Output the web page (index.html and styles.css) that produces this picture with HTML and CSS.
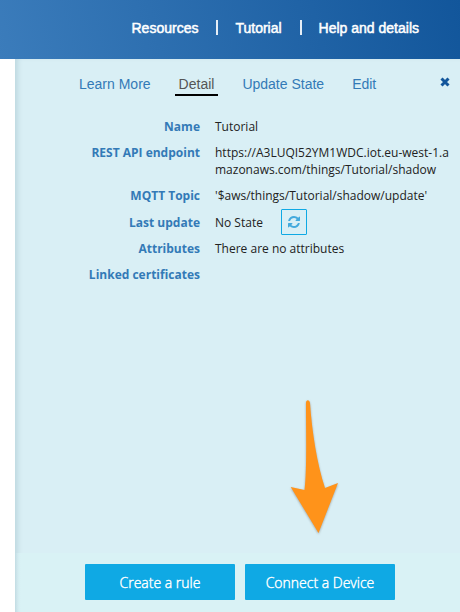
FILE: index.html
```html
<!DOCTYPE html>
<html lang="en">
<head>
<meta charset="utf-8">
<meta name="viewport" content="width=device-width, initial-scale=1">
<title>Tutorial</title>
<link rel="stylesheet" href="styles.css">
</head>
<body>
<header class="topbar">
  <nav class="topnav" aria-label="Main">
    <a href="#">Resources</a>
    <a href="#">Tutorial</a>
    <a href="#">Help and details</a>
  </nav>
</header>
<main class="panel">
  <div class="panel-head">
    <nav class="tabs" aria-label="Thing">
      <a class="tab" href="#">Learn More</a>
      <a class="tab active" href="#" aria-current="page">Detail</a>
      <a class="tab" href="#">Update State</a>
      <a class="tab" href="#">Edit</a>
    </nav>
    <button class="close" type="button" aria-label="Close">
      <svg width="10" height="10" viewBox="0 0 10 10"><path d="M1.500 1.500 8.500 8.500M8.500 1.500 1.500 8.500" stroke="currentColor" stroke-width="3"/></svg>
    </button>
  </div>
  <dl class="details">
    <dt>Name</dt><dd>Tutorial</dd>
    <dt>REST API endpoint</dt><dd>https://A3LUQI52YM1WDC.iot.eu-west-1.amazonaws.com/things/Tutorial/shadow</dd>
    <dt>MQTT Topic</dt><dd>'$aws/things/Tutorial/shadow/update'</dd>
    <dt class="state">Last update</dt>
    <dd class="state">No State
      <button class="refresh" type="button" aria-label="Refresh">
        <svg width="12" height="12" viewBox="0 0 1536 1536" fill="currentColor"><path d="M1511 928q0 5-1 7-64 268-268 434.500T764 1536q-146 0-282.500-55T238 1324l-129 129q-19 19-45 19t-45-19-19-45V960q0-26 19-45t45-19h448q26 0 45 19t19 45-19 45l-137 137q71 66 161 102t187 36q134 0 250-65t186-179q11-17 53-117 8-23 30-23h192q13 0 22.500 9.500t9.500 22.500zM1536 128v448q0 26-19 45t-45 19h-448q-26 0-45-19t-19-45 19-45l138-138Q969 256 768 256q-134 0-250 65T332 500q-11 17-53 117-8 23-30 23H50q-13 0-22.500-9.500T18 608v-7q65-268 270-434.500T768 0q146 0 284 55.500T1297 212l130-129q19-19 45-19t45 19 19 45z"/></svg>
      </button>
    </dd>
    <dt>Attributes</dt><dd>There are no attributes</dd>
    <dt>Linked certificates</dt><dd></dd>
  </dl>
  <div class="canvas">
    <svg class="arrow" width="50" height="138" viewBox="0 0 50 138" aria-hidden="true"><path d="M17 3C17-.7 20.500-.7 21 3C23 32 28 64 36 88L49 83L29.500 133L1.700 87L15.500 90C18 72 17 32 17 3Z"/></svg>
  </div>
  <footer class="actions">
    <button class="action" type="button">Create a rule</button>
    <button class="action" type="button">Connect a Device</button>
  </footer>
</main>
</body>
</html>
```
FILE: styles.css
```css
* { box-sizing: border-box; }
body {
  margin: 0;
  min-height: 100vh;
  display: flex;
  flex-direction: column;
  background: #fff;
  font-family: "Open Sans", sans-serif;
  font-size: 12px;
  line-height: 17px;
  color: #222;
}
a { text-decoration: none; }
button { cursor: pointer; font-family: inherit; }
.topbar {
  padding: 18px 41px 21px 16px;
  background: linear-gradient(75deg, #3b7cbb, #12569b);
}
.topnav {
  display: flex;
  justify-content: flex-end;
  font: 14px/20px "Liberation Sans", sans-serif;
}
.topnav a { color: #fff; -webkit-text-stroke: 0.5px #fff; }
.topnav a + a::before {
  content: "";
  display: inline-block;
  width: 2px;
  height: 15px;
  margin: 0 17px 0 18px;
  vertical-align: -2px;
  background: #e6eef6;
}
.panel {
  flex: 1;
  display: flex;
  flex-direction: column;
  margin-left: 15px;
  background: #d9eff5;
  box-shadow: inset 5px 0 5px -2px #bfd9e1;
}
.panel-head {
  display: flex;
  justify-content: space-between;
  align-items: flex-start;
  padding: 15px 10px 0 64px;
}
.tabs { display: flex; gap: 28px; }
.tab {
  color: #337ab7;
  font: 14px/20px "Liberation Sans", sans-serif;
}
.tab.active {
  margin: 0 -4px;
  padding: 0 4px;
  color: #555;
  border-bottom: 2px solid #000;
}
.close {
  display: flex;
  margin-top: 3px;
  padding: 0;
  border: 0;
  background: none;
  color: #12569b;
}
.details {
  display: grid;
  grid-template-columns: 170px 1fr;
  column-gap: 15px;
  row-gap: 9px;
  margin: 22px 10px 0 15px;
}
dt { text-align: right; font-weight: 700; color: #337ab7; }
dd { margin: 0; word-break: break-all; }
.state { display: flex; align-items: center; justify-content: flex-end; margin: -4px 0; }
dd.state { justify-content: flex-start; gap: 18px; }
.refresh {
  display: grid;
  place-items: center;
  width: 26px;
  height: 26px;
  padding: 0;
  border: 1px solid #0fa9e4;
  border-radius: 1px;
  background: none;
  color: #44aadd;
}
.canvas {
  flex: 1;
  display: flex;
  align-items: flex-end;
  justify-content: flex-end;
  padding: 0 121px 15px 0;
}
.arrow { fill: #ff931a; filter: drop-shadow(0 1px 1px #7779); }
.actions {
  display: flex;
  flex-wrap: wrap;
  gap: 10px;
  padding: 11px 12px 12px 70px;
  background: linear-gradient(90deg, #d9f2f500, #d9f2f5 6px);
}
.action {
  width: 150px;
  height: 36px;
  padding: 0;
  border: 0;
  border-radius: 1px;
  background: #0fa9e4;
  color: #fff;
  font-size: 14px;
  font-weight: 300;
  -webkit-text-stroke: 0.4px #fff;
}
```
